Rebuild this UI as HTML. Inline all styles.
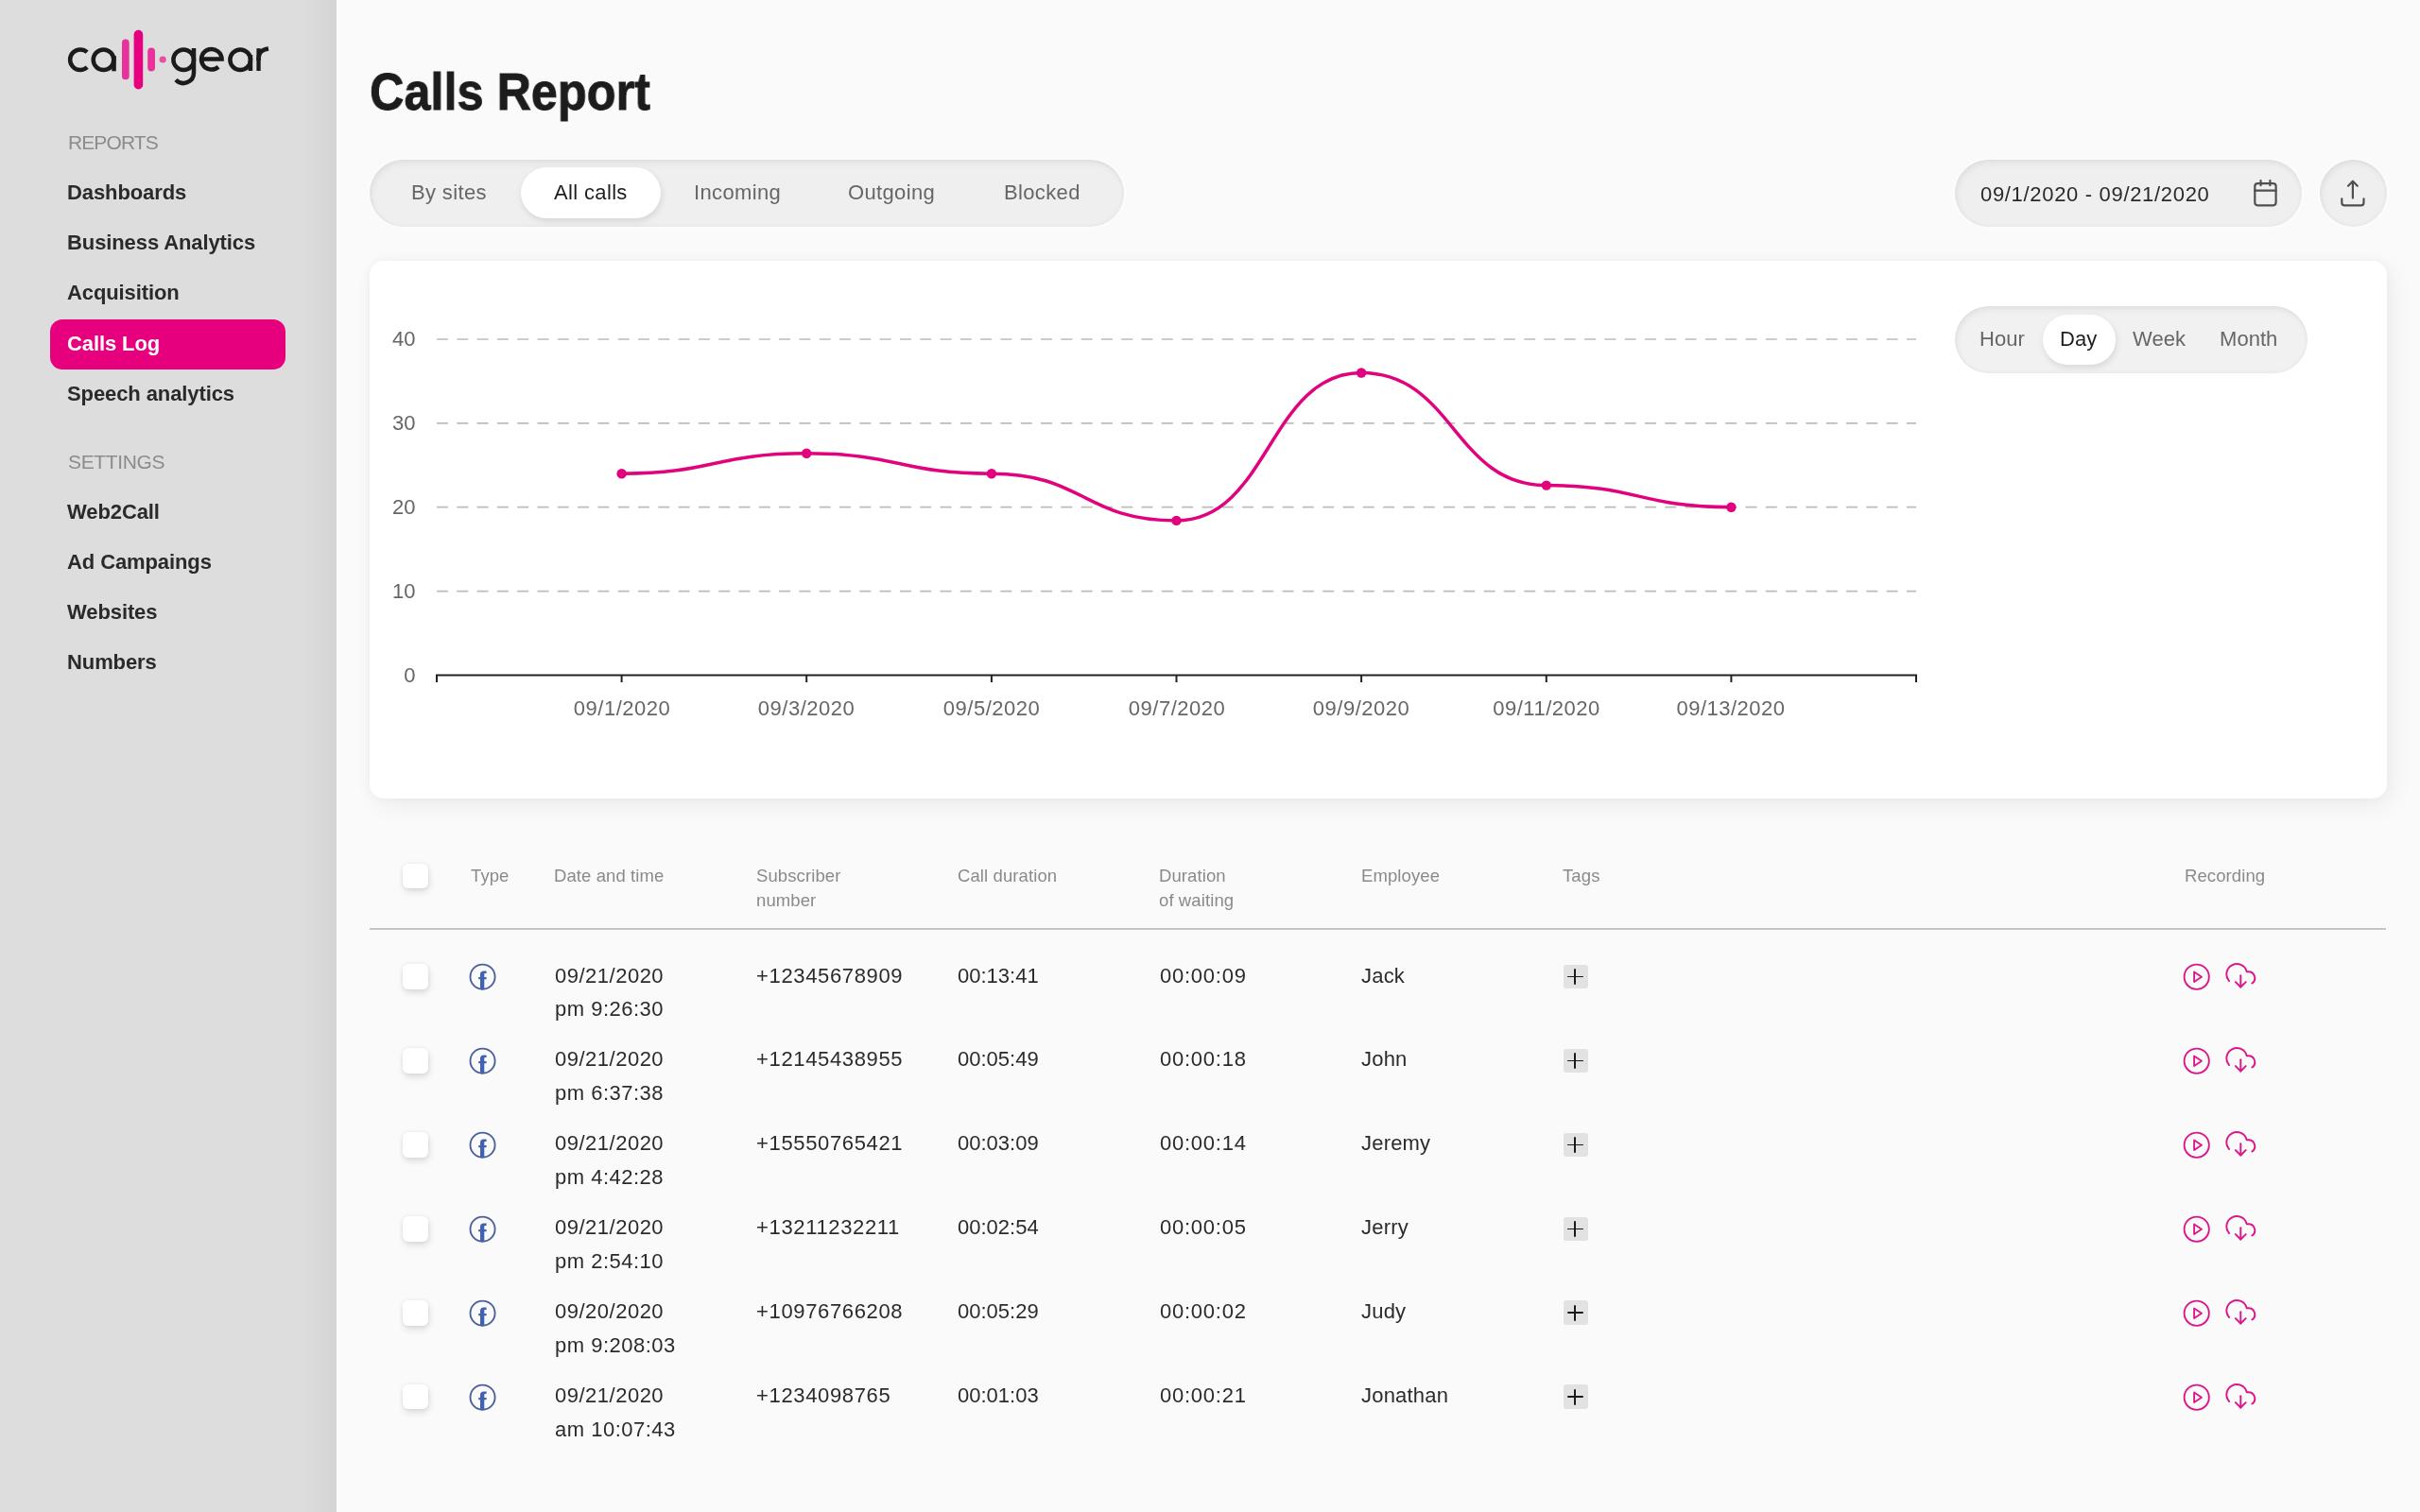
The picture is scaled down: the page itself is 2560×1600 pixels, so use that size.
<!DOCTYPE html>
<html><head><meta charset="utf-8"><title>Calls Report</title><style>
*{margin:0;padding:0;box-sizing:border-box}
html,body{width:2560px;height:1600px;overflow:hidden;background:#fafafa;font-family:"Liberation Sans",sans-serif}
.t{position:absolute;white-space:nowrap;will-change:transform}
.ic{position:absolute}
#sb{position:absolute;left:0;top:0;width:355.5px;height:1600px;background:linear-gradient(90deg,#dddddd 0,#dddddd 318px,#d8d8d8 340px,#d5d5d5 355px);box-shadow:1.5px 0 2px #fefefe}
.pillbox{position:absolute;border-radius:36px;background:#efefef;box-shadow:inset 0 0 5px rgba(0,0,0,0.05),inset 2px 4px 7px rgba(0,0,0,0.05),0 0 6px rgba(255,255,255,0.9)}
.pill{position:absolute;border-radius:27px;background:#fff;box-shadow:1px 3px 7px rgba(0,0,0,0.11)}
#card{position:absolute;left:391px;top:275.5px;width:2134px;height:569.5px;background:#fff;border-radius:15px;box-shadow:0 0 12px rgba(0,0,0,0.04),6px 8px 26px rgba(0,0,0,0.055)}
.cb{position:absolute;width:26.5px;height:26.5px;border-radius:6px;background:#fff;box-shadow:0 0 5px rgba(0,0,0,0.07),1px 4px 7px rgba(0,0,0,0.11)}
.plus{position:absolute;width:25.7px;height:25.7px;border-radius:3px;background:#e2e2e2}
.plus:before{content:"";position:absolute;left:4.4px;top:12px;width:16.8px;height:1.7px;background:#1a1a1a;border-radius:1px}
.plus:after{content:"";position:absolute;left:11.3px;top:4.4px;width:1.7px;height:17.2px;background:#1a1a1a;border-radius:1px}
</style></head>
<body>
<div id="sb"></div>
<svg style="position:absolute;left:0;top:0" width="356" height="110" viewBox="0 0 356 110">
<g fill="none" stroke="#1b1b1b" stroke-width="4.5">
 <path d="M92.2 55.2 A10.8 10.8 0 1 0 92.2 71.2"/>
 <circle cx="109.5" cy="63.2" r="10.8"/>
 <circle cx="194.2" cy="63.2" r="10.8"/>
 <path d="M205 51 V77 A11 11 0 0 1 186 84.5"/>
 <path d="M213.2 62.6 H234.6 A10.8 10.8 0 1 0 231 70.8"/>
 <circle cx="254.2" cy="63.2" r="10.8"/>
</g>
<rect x="118.3" y="59" width="4.5" height="16.3" fill="#1b1b1b"/>
<rect x="262.7" y="58" width="4.5" height="17" fill="#1b1b1b"/>
<rect x="271.4" y="51.2" width="4.3" height="23.8" fill="#1b1b1b"/>
<path d="M273.5 64 C273.5 55 277 52.5 284 51.5" fill="none" stroke="#1b1b1b" stroke-width="4.5"/>
<rect x="129" y="41.4" width="7.7" height="42.9" rx="3.85" fill="#e6339b"/>
<rect x="141.6" y="31.8" width="9.6" height="62.7" rx="4.8" fill="#e6007f"/>
<rect x="156.2" y="50.5" width="7.8" height="25" rx="3.9" fill="#e8339b"/>
<circle cx="172.2" cy="63" r="3.6" fill="#ea4fa5"/>
</svg>
<div class="t" style="left:72.0px;top:140.3px;font-size:21px;line-height:21px;font-weight:400;color:#8c8c8c;letter-spacing:-0.9px;">REPORTS</div>
<div style="position:absolute;left:53.4px;top:337.6px;width:248.8px;height:53px;border-radius:13px;background:#e6007e"></div>
<div class="t" style="left:71.0px;top:192.6px;font-size:22px;line-height:22px;font-weight:700;color:#2a2a2a;letter-spacing:-0.1px;">Dashboards</div>
<div class="t" style="left:71.0px;top:245.9px;font-size:22px;line-height:22px;font-weight:700;color:#2a2a2a;letter-spacing:-0.1px;">Business Analytics</div>
<div class="t" style="left:71.0px;top:299.3px;font-size:22px;line-height:22px;font-weight:700;color:#2a2a2a;letter-spacing:-0.1px;">Acquisition</div>
<div class="t" style="left:71.0px;top:352.7px;font-size:22px;line-height:22px;font-weight:700;color:#ffffff;letter-spacing:-0.1px;">Calls Log</div>
<div class="t" style="left:71.0px;top:406.3px;font-size:22px;line-height:22px;font-weight:700;color:#2a2a2a;letter-spacing:-0.1px;">Speech analytics</div>
<div class="t" style="left:72.0px;top:478.1px;font-size:21px;line-height:21px;font-weight:400;color:#8c8c8c;letter-spacing:-0.35px;">SETTINGS</div>
<div class="t" style="left:71.0px;top:530.6px;font-size:22px;line-height:22px;font-weight:700;color:#2a2a2a;letter-spacing:-0.1px;">Web2Call</div>
<div class="t" style="left:71.0px;top:583.7px;font-size:22px;line-height:22px;font-weight:700;color:#2a2a2a;letter-spacing:-0.1px;">Ad Campaings</div>
<div class="t" style="left:71.0px;top:636.7px;font-size:22px;line-height:22px;font-weight:700;color:#2a2a2a;letter-spacing:-0.1px;">Websites</div>
<div class="t" style="left:71.0px;top:690.1px;font-size:22px;line-height:22px;font-weight:700;color:#2a2a2a;letter-spacing:-0.1px;">Numbers</div>
<div class="t" style="left:391.0px;top:69.3px;font-size:56px;line-height:56px;font-weight:700;color:#1c1c1c;letter-spacing:0px;transform:scaleX(0.9);transform-origin:0 0;-webkit-text-stroke:0.9px #1c1c1c;">Calls Report</div>
<div class="pillbox" style="left:391px;top:169px;width:798px;height:71px"></div>
<div class="pill" style="left:551px;top:177.4px;width:147.5px;height:54px"></div>
<div class="t" style="left:434.9px;top:193.3px;font-size:22px;line-height:22px;font-weight:400;color:#666;letter-spacing:0.35px;">By sites</div>
<div class="t" style="left:585.9px;top:193.3px;font-size:22px;line-height:22px;font-weight:400;color:#1e1e1e;letter-spacing:0.35px;">All calls</div>
<div class="t" style="left:733.5px;top:193.3px;font-size:22px;line-height:22px;font-weight:400;color:#666;letter-spacing:0.35px;">Incoming</div>
<div class="t" style="left:897.4px;top:193.3px;font-size:22px;line-height:22px;font-weight:400;color:#666;letter-spacing:0.35px;">Outgoing</div>
<div class="t" style="left:1062.3px;top:193.3px;font-size:22px;line-height:22px;font-weight:400;color:#666;letter-spacing:0.35px;">Blocked</div>
<div class="pillbox" style="left:2068px;top:169px;width:367px;height:71px"></div>
<div class="t" style="left:2094.5px;top:194.8px;font-size:22px;line-height:22px;font-weight:400;color:#2a2a2a;letter-spacing:0.68px;">09/1/2020 - 09/21/2020</div>
<svg style="position:absolute;left:2380px;top:188px" width="32" height="32" viewBox="0 0 32 32" fill="none" stroke="#505050" stroke-width="2.2" stroke-linecap="round">
<rect x="5.3" y="6.2" width="22.3" height="23.1" rx="3"/><line x1="5.3" y1="13.7" x2="27.6" y2="13.7"/><line x1="11.5" y1="3.1" x2="11.5" y2="8.2"/><line x1="21.4" y1="3.1" x2="21.4" y2="8.2"/></svg>
<div class="pillbox" style="left:2453.6px;top:169px;width:71px;height:71px"></div>
<svg style="position:absolute;left:2473px;top:188px" width="32" height="32" viewBox="0 0 32 32" fill="none" stroke="#505050" stroke-width="2.2" stroke-linecap="round" stroke-linejoin="round">
<path d="M4.3 22.4 V26.4 Q4.3 29.3 7.2 29.3 H24.6 Q27.5 29.3 27.5 26.4 V22.4"/><line x1="15.9" y1="3.8" x2="15.9" y2="21.6"/><polyline points="11 8.7 15.9 3.8 20.8 8.7"/></svg>
<div id="card"></div>
<div class="t" style="left:300px;width:139.5px;text-align:right;top:348.3px;font-size:22px;line-height:22px;color:#666">40</div>
<div class="t" style="left:300px;width:139.5px;text-align:right;top:437.2px;font-size:22px;line-height:22px;color:#666">30</div>
<div class="t" style="left:300px;width:139.5px;text-align:right;top:526.0px;font-size:22px;line-height:22px;color:#666">20</div>
<div class="t" style="left:300px;width:139.5px;text-align:right;top:614.8px;font-size:22px;line-height:22px;color:#666">10</div>
<div class="t" style="left:300px;width:139.5px;text-align:right;top:703.7px;font-size:22px;line-height:22px;color:#666">0</div>
<svg style="position:absolute;left:0;top:0" width="2560" height="800"><line x1="462.0" y1="359" x2="2027.0" y2="359" stroke="#bcbcbc" stroke-width="1.7" stroke-dasharray="12 9.3"/><line x1="462.0" y1="447.85" x2="2027.0" y2="447.85" stroke="#bcbcbc" stroke-width="1.7" stroke-dasharray="12 9.3"/><line x1="462.0" y1="536.7" x2="2027.0" y2="536.7" stroke="#bcbcbc" stroke-width="1.7" stroke-dasharray="12 9.3"/><line x1="462.0" y1="625.55" x2="2027.0" y2="625.55" stroke="#bcbcbc" stroke-width="1.7" stroke-dasharray="12 9.3"/><line x1="461.0" y1="714.4" x2="2028.0" y2="714.4" stroke="#222" stroke-width="2"/><line x1="462.0" y1="714" x2="462.0" y2="722" stroke="#222" stroke-width="2"/><line x1="657.6" y1="714" x2="657.6" y2="722" stroke="#222" stroke-width="2"/><line x1="853.2" y1="714" x2="853.2" y2="722" stroke="#222" stroke-width="2"/><line x1="1048.9" y1="714" x2="1048.9" y2="722" stroke="#222" stroke-width="2"/><line x1="1244.5" y1="714" x2="1244.5" y2="722" stroke="#222" stroke-width="2"/><line x1="1440.1" y1="714" x2="1440.1" y2="722" stroke="#222" stroke-width="2"/><line x1="1635.8" y1="714" x2="1635.8" y2="722" stroke="#222" stroke-width="2"/><line x1="1831.4" y1="714" x2="1831.4" y2="722" stroke="#222" stroke-width="2"/><line x1="2027.0" y1="714" x2="2027.0" y2="722" stroke="#222" stroke-width="2"/><path d="M657.6,501.2 C755.4,501.2 755.4,479.8 853.2,479.8 C951.1,479.8 951.1,501.2 1048.9,501.2 C1146.7,501.2 1146.7,550.9 1244.5,550.9 C1342.3,550.9 1342.3,394.5 1440.1,394.5 C1537.9,394.5 1537.9,513.6 1635.8,513.6 C1733.6,513.6 1733.6,536.7 1831.4,536.7" fill="none" stroke="#e0037d" stroke-width="3.5"/><circle cx="657.6" cy="501.2" r="5.2" fill="#e2007d"/><circle cx="853.2" cy="479.8" r="5.2" fill="#e2007d"/><circle cx="1048.9" cy="501.2" r="5.2" fill="#e2007d"/><circle cx="1244.5" cy="550.9" r="5.2" fill="#e2007d"/><circle cx="1440.1" cy="394.5" r="5.2" fill="#e2007d"/><circle cx="1635.8" cy="513.6" r="5.2" fill="#e2007d"/><circle cx="1831.4" cy="536.7" r="5.2" fill="#e2007d"/></svg>
<div class="t" style="left:557.6px;width:200px;text-align:center;top:739.0px;font-size:22px;line-height:22px;color:#666;letter-spacing:0.5px">09/1/2020</div>
<div class="t" style="left:753.2px;width:200px;text-align:center;top:739.0px;font-size:22px;line-height:22px;color:#666;letter-spacing:0.5px">09/3/2020</div>
<div class="t" style="left:948.9px;width:200px;text-align:center;top:739.0px;font-size:22px;line-height:22px;color:#666;letter-spacing:0.5px">09/5/2020</div>
<div class="t" style="left:1144.5px;width:200px;text-align:center;top:739.0px;font-size:22px;line-height:22px;color:#666;letter-spacing:0.5px">09/7/2020</div>
<div class="t" style="left:1340.1px;width:200px;text-align:center;top:739.0px;font-size:22px;line-height:22px;color:#666;letter-spacing:0.5px">09/9/2020</div>
<div class="t" style="left:1535.8px;width:200px;text-align:center;top:739.0px;font-size:22px;line-height:22px;color:#666;letter-spacing:0.5px">09/11/2020</div>
<div class="t" style="left:1731.4px;width:200px;text-align:center;top:739.0px;font-size:22px;line-height:22px;color:#666;letter-spacing:0.5px">09/13/2020</div>
<div class="pillbox" style="left:2068px;top:323.6px;width:373px;height:71px;background:#f1f1f1"></div>
<div class="pill" style="left:2161.4px;top:332.6px;width:76.3px;height:53.4px"></div>
<div class="t" style="left:2093.9px;top:347.9px;font-size:22px;line-height:22px;font-weight:400;color:#666;letter-spacing:0.05px;">Hour</div>
<div class="t" style="left:2179.2px;top:347.9px;font-size:22px;line-height:22px;font-weight:400;color:#1e1e1e;letter-spacing:0.05px;">Day</div>
<div class="t" style="left:2255.5px;top:347.9px;font-size:22px;line-height:22px;font-weight:400;color:#666;letter-spacing:0.05px;">Week</div>
<div class="t" style="left:2347.9px;top:347.9px;font-size:22px;line-height:22px;font-weight:400;color:#666;letter-spacing:0.05px;">Month</div>
<div class="cb" style="left:426.4px;top:913.7px"></div>
<div class="t" style="left:497.9px;top:913.9px;font-size:18.5px;line-height:25.8px;color:#8a8a8a;letter-spacing:0.1px">Type</div>
<div class="t" style="left:586.4px;top:913.9px;font-size:18.5px;line-height:25.8px;color:#8a8a8a;letter-spacing:0.1px">Date and time</div>
<div class="t" style="left:799.6px;top:913.9px;font-size:18.5px;line-height:25.8px;color:#8a8a8a;letter-spacing:0.1px">Subscriber<br>number</div>
<div class="t" style="left:1012.5px;top:913.9px;font-size:18.5px;line-height:25.8px;color:#8a8a8a;letter-spacing:0.1px">Call duration</div>
<div class="t" style="left:1226.2px;top:913.9px;font-size:18.5px;line-height:25.8px;color:#8a8a8a;letter-spacing:0.1px">Duration<br>of waiting</div>
<div class="t" style="left:1439.7px;top:913.9px;font-size:18.5px;line-height:25.8px;color:#8a8a8a;letter-spacing:0.1px">Employee</div>
<div class="t" style="left:1653.0px;top:913.9px;font-size:18.5px;line-height:25.8px;color:#8a8a8a;letter-spacing:0.1px">Tags</div>
<div class="t" style="left:2310.7px;top:913.9px;font-size:18.5px;line-height:25.8px;color:#8a8a8a;letter-spacing:0.1px">Recording</div>
<div style="position:absolute;left:391px;top:982.3px;width:2133px;height:2px;background:#c4c4c4"></div>
<div class="cb" style="left:426.4px;top:1020.4px"></div>
<svg class="ic" style="left:495.1px;top:1018.1px" width="30" height="30" viewBox="0 0 30 30"><circle cx="15.55" cy="15.65" r="13.05" fill="none" stroke="#4c5f9c" stroke-width="1.85"/><path d="M13 28.6 V18.3 H11.2 V16.1 H13 V13.4 C13 10.9 14.3 9.5 16.7 9.5 H19.6 V11.9 H18 C17.5 11.9 17.3 12.2 17.3 12.7 V16.1 H19.6 V18.3 H17.3 V28.6 Z" fill="#4262b0"/></svg>
<div class="t" style="left:586.5px;top:1021.5px;font-size:22px;line-height:22px;font-weight:400;color:#2b2b2b;letter-spacing:0.5px;">09/21/2020</div>
<div class="t" style="left:586.5px;top:1057.3px;font-size:22px;line-height:22px;font-weight:400;color:#2b2b2b;letter-spacing:0.5px;">pm 9:26:30</div>
<div class="t" style="left:799.5px;top:1021.5px;font-size:22px;line-height:22px;font-weight:400;color:#2b2b2b;letter-spacing:0.65px;">+12345678909</div>
<div class="t" style="left:1012.5px;top:1021.5px;font-size:22px;line-height:22px;font-weight:400;color:#2b2b2b;letter-spacing:0.0px;">00:13:41</div>
<div class="t" style="left:1226.7px;top:1021.5px;font-size:22px;line-height:22px;font-weight:400;color:#2b2b2b;letter-spacing:0.75px;">00:00:09</div>
<div class="t" style="left:1439.7px;top:1021.5px;font-size:22px;line-height:22px;font-weight:400;color:#2b2b2b;letter-spacing:0.2px;">Jack</div>
<div class="plus" style="left:1654px;top:1020.8px"></div>
<svg class="ic" style="left:2308.1px;top:1018.1px" width="32" height="32" viewBox="0 0 24.43 24.43" fill="none" stroke="#dc168a" stroke-width="1.42" stroke-linejoin="round"><circle cx="12" cy="12" r="10"/><polygon points="10 8 16 12 10 16 10 8"/></svg>
<svg class="ic" style="left:2354.1px;top:1016.4px" width="36" height="34" viewBox="0 0 26.51 25.04" fill="none" stroke="#dc168a" stroke-width="1.42" stroke-linecap="round" stroke-linejoin="round"><polyline points="8 17 12 21 16 17"/><line x1="12" y1="12" x2="12" y2="21"/><path d="M20.88 18.09A5 5 0 0 0 18 9h-1.26A8 8 0 1 0 3 16.29"/></svg>
<div class="cb" style="left:426.4px;top:1109.3px"></div>
<svg class="ic" style="left:495.1px;top:1107.0px" width="30" height="30" viewBox="0 0 30 30"><circle cx="15.55" cy="15.65" r="13.05" fill="none" stroke="#4c5f9c" stroke-width="1.85"/><path d="M13 28.6 V18.3 H11.2 V16.1 H13 V13.4 C13 10.9 14.3 9.5 16.7 9.5 H19.6 V11.9 H18 C17.5 11.9 17.3 12.2 17.3 12.7 V16.1 H19.6 V18.3 H17.3 V28.6 Z" fill="#4262b0"/></svg>
<div class="t" style="left:586.5px;top:1110.4px;font-size:22px;line-height:22px;font-weight:400;color:#2b2b2b;letter-spacing:0.5px;">09/21/2020</div>
<div class="t" style="left:586.5px;top:1146.2px;font-size:22px;line-height:22px;font-weight:400;color:#2b2b2b;letter-spacing:0.5px;">pm 6:37:38</div>
<div class="t" style="left:799.5px;top:1110.4px;font-size:22px;line-height:22px;font-weight:400;color:#2b2b2b;letter-spacing:0.65px;">+12145438955</div>
<div class="t" style="left:1012.5px;top:1110.4px;font-size:22px;line-height:22px;font-weight:400;color:#2b2b2b;letter-spacing:0.0px;">00:05:49</div>
<div class="t" style="left:1226.7px;top:1110.4px;font-size:22px;line-height:22px;font-weight:400;color:#2b2b2b;letter-spacing:0.75px;">00:00:18</div>
<div class="t" style="left:1439.7px;top:1110.4px;font-size:22px;line-height:22px;font-weight:400;color:#2b2b2b;letter-spacing:0.2px;">John</div>
<div class="plus" style="left:1654px;top:1109.7px"></div>
<svg class="ic" style="left:2308.1px;top:1107.0px" width="32" height="32" viewBox="0 0 24.43 24.43" fill="none" stroke="#dc168a" stroke-width="1.42" stroke-linejoin="round"><circle cx="12" cy="12" r="10"/><polygon points="10 8 16 12 10 16 10 8"/></svg>
<svg class="ic" style="left:2354.1px;top:1105.3px" width="36" height="34" viewBox="0 0 26.51 25.04" fill="none" stroke="#dc168a" stroke-width="1.42" stroke-linecap="round" stroke-linejoin="round"><polyline points="8 17 12 21 16 17"/><line x1="12" y1="12" x2="12" y2="21"/><path d="M20.88 18.09A5 5 0 0 0 18 9h-1.26A8 8 0 1 0 3 16.29"/></svg>
<div class="cb" style="left:426.4px;top:1198.2px"></div>
<svg class="ic" style="left:495.1px;top:1195.9px" width="30" height="30" viewBox="0 0 30 30"><circle cx="15.55" cy="15.65" r="13.05" fill="none" stroke="#4c5f9c" stroke-width="1.85"/><path d="M13 28.6 V18.3 H11.2 V16.1 H13 V13.4 C13 10.9 14.3 9.5 16.7 9.5 H19.6 V11.9 H18 C17.5 11.9 17.3 12.2 17.3 12.7 V16.1 H19.6 V18.3 H17.3 V28.6 Z" fill="#4262b0"/></svg>
<div class="t" style="left:586.5px;top:1199.3px;font-size:22px;line-height:22px;font-weight:400;color:#2b2b2b;letter-spacing:0.5px;">09/21/2020</div>
<div class="t" style="left:586.5px;top:1235.1px;font-size:22px;line-height:22px;font-weight:400;color:#2b2b2b;letter-spacing:0.5px;">pm 4:42:28</div>
<div class="t" style="left:799.5px;top:1199.3px;font-size:22px;line-height:22px;font-weight:400;color:#2b2b2b;letter-spacing:0.65px;">+15550765421</div>
<div class="t" style="left:1012.5px;top:1199.3px;font-size:22px;line-height:22px;font-weight:400;color:#2b2b2b;letter-spacing:0.0px;">00:03:09</div>
<div class="t" style="left:1226.7px;top:1199.3px;font-size:22px;line-height:22px;font-weight:400;color:#2b2b2b;letter-spacing:0.75px;">00:00:14</div>
<div class="t" style="left:1439.7px;top:1199.3px;font-size:22px;line-height:22px;font-weight:400;color:#2b2b2b;letter-spacing:0.2px;">Jeremy</div>
<div class="plus" style="left:1654px;top:1198.6px"></div>
<svg class="ic" style="left:2308.1px;top:1195.9px" width="32" height="32" viewBox="0 0 24.43 24.43" fill="none" stroke="#dc168a" stroke-width="1.42" stroke-linejoin="round"><circle cx="12" cy="12" r="10"/><polygon points="10 8 16 12 10 16 10 8"/></svg>
<svg class="ic" style="left:2354.1px;top:1194.2px" width="36" height="34" viewBox="0 0 26.51 25.04" fill="none" stroke="#dc168a" stroke-width="1.42" stroke-linecap="round" stroke-linejoin="round"><polyline points="8 17 12 21 16 17"/><line x1="12" y1="12" x2="12" y2="21"/><path d="M20.88 18.09A5 5 0 0 0 18 9h-1.26A8 8 0 1 0 3 16.29"/></svg>
<div class="cb" style="left:426.4px;top:1287.1px"></div>
<svg class="ic" style="left:495.1px;top:1284.8px" width="30" height="30" viewBox="0 0 30 30"><circle cx="15.55" cy="15.65" r="13.05" fill="none" stroke="#4c5f9c" stroke-width="1.85"/><path d="M13 28.6 V18.3 H11.2 V16.1 H13 V13.4 C13 10.9 14.3 9.5 16.7 9.5 H19.6 V11.9 H18 C17.5 11.9 17.3 12.2 17.3 12.7 V16.1 H19.6 V18.3 H17.3 V28.6 Z" fill="#4262b0"/></svg>
<div class="t" style="left:586.5px;top:1288.2px;font-size:22px;line-height:22px;font-weight:400;color:#2b2b2b;letter-spacing:0.5px;">09/21/2020</div>
<div class="t" style="left:586.5px;top:1324.0px;font-size:22px;line-height:22px;font-weight:400;color:#2b2b2b;letter-spacing:0.5px;">pm 2:54:10</div>
<div class="t" style="left:799.5px;top:1288.2px;font-size:22px;line-height:22px;font-weight:400;color:#2b2b2b;letter-spacing:0.65px;">+13211232211</div>
<div class="t" style="left:1012.5px;top:1288.2px;font-size:22px;line-height:22px;font-weight:400;color:#2b2b2b;letter-spacing:0.0px;">00:02:54</div>
<div class="t" style="left:1226.7px;top:1288.2px;font-size:22px;line-height:22px;font-weight:400;color:#2b2b2b;letter-spacing:0.75px;">00:00:05</div>
<div class="t" style="left:1439.7px;top:1288.2px;font-size:22px;line-height:22px;font-weight:400;color:#2b2b2b;letter-spacing:0.2px;">Jerry</div>
<div class="plus" style="left:1654px;top:1287.5px"></div>
<svg class="ic" style="left:2308.1px;top:1284.8px" width="32" height="32" viewBox="0 0 24.43 24.43" fill="none" stroke="#dc168a" stroke-width="1.42" stroke-linejoin="round"><circle cx="12" cy="12" r="10"/><polygon points="10 8 16 12 10 16 10 8"/></svg>
<svg class="ic" style="left:2354.1px;top:1283.1px" width="36" height="34" viewBox="0 0 26.51 25.04" fill="none" stroke="#dc168a" stroke-width="1.42" stroke-linecap="round" stroke-linejoin="round"><polyline points="8 17 12 21 16 17"/><line x1="12" y1="12" x2="12" y2="21"/><path d="M20.88 18.09A5 5 0 0 0 18 9h-1.26A8 8 0 1 0 3 16.29"/></svg>
<div class="cb" style="left:426.4px;top:1376.0px"></div>
<svg class="ic" style="left:495.1px;top:1373.7px" width="30" height="30" viewBox="0 0 30 30"><circle cx="15.55" cy="15.65" r="13.05" fill="none" stroke="#4c5f9c" stroke-width="1.85"/><path d="M13 28.6 V18.3 H11.2 V16.1 H13 V13.4 C13 10.9 14.3 9.5 16.7 9.5 H19.6 V11.9 H18 C17.5 11.9 17.3 12.2 17.3 12.7 V16.1 H19.6 V18.3 H17.3 V28.6 Z" fill="#4262b0"/></svg>
<div class="t" style="left:586.5px;top:1377.1px;font-size:22px;line-height:22px;font-weight:400;color:#2b2b2b;letter-spacing:0.5px;">09/20/2020</div>
<div class="t" style="left:586.5px;top:1412.9px;font-size:22px;line-height:22px;font-weight:400;color:#2b2b2b;letter-spacing:0.5px;">pm 9:208:03</div>
<div class="t" style="left:799.5px;top:1377.1px;font-size:22px;line-height:22px;font-weight:400;color:#2b2b2b;letter-spacing:0.65px;">+10976766208</div>
<div class="t" style="left:1012.5px;top:1377.1px;font-size:22px;line-height:22px;font-weight:400;color:#2b2b2b;letter-spacing:0.0px;">00:05:29</div>
<div class="t" style="left:1226.7px;top:1377.1px;font-size:22px;line-height:22px;font-weight:400;color:#2b2b2b;letter-spacing:0.75px;">00:00:02</div>
<div class="t" style="left:1439.7px;top:1377.1px;font-size:22px;line-height:22px;font-weight:400;color:#2b2b2b;letter-spacing:0.2px;">Judy</div>
<div class="plus" style="left:1654px;top:1376.4px"></div>
<svg class="ic" style="left:2308.1px;top:1373.7px" width="32" height="32" viewBox="0 0 24.43 24.43" fill="none" stroke="#dc168a" stroke-width="1.42" stroke-linejoin="round"><circle cx="12" cy="12" r="10"/><polygon points="10 8 16 12 10 16 10 8"/></svg>
<svg class="ic" style="left:2354.1px;top:1372.0px" width="36" height="34" viewBox="0 0 26.51 25.04" fill="none" stroke="#dc168a" stroke-width="1.42" stroke-linecap="round" stroke-linejoin="round"><polyline points="8 17 12 21 16 17"/><line x1="12" y1="12" x2="12" y2="21"/><path d="M20.88 18.09A5 5 0 0 0 18 9h-1.26A8 8 0 1 0 3 16.29"/></svg>
<div class="cb" style="left:426.4px;top:1464.9px"></div>
<svg class="ic" style="left:495.1px;top:1462.6px" width="30" height="30" viewBox="0 0 30 30"><circle cx="15.55" cy="15.65" r="13.05" fill="none" stroke="#4c5f9c" stroke-width="1.85"/><path d="M13 28.6 V18.3 H11.2 V16.1 H13 V13.4 C13 10.9 14.3 9.5 16.7 9.5 H19.6 V11.9 H18 C17.5 11.9 17.3 12.2 17.3 12.7 V16.1 H19.6 V18.3 H17.3 V28.6 Z" fill="#4262b0"/></svg>
<div class="t" style="left:586.5px;top:1466.0px;font-size:22px;line-height:22px;font-weight:400;color:#2b2b2b;letter-spacing:0.5px;">09/21/2020</div>
<div class="t" style="left:586.5px;top:1501.8px;font-size:22px;line-height:22px;font-weight:400;color:#2b2b2b;letter-spacing:0.5px;">am 10:07:43</div>
<div class="t" style="left:799.5px;top:1466.0px;font-size:22px;line-height:22px;font-weight:400;color:#2b2b2b;letter-spacing:0.65px;">+1234098765</div>
<div class="t" style="left:1012.5px;top:1466.0px;font-size:22px;line-height:22px;font-weight:400;color:#2b2b2b;letter-spacing:0.0px;">00:01:03</div>
<div class="t" style="left:1226.7px;top:1466.0px;font-size:22px;line-height:22px;font-weight:400;color:#2b2b2b;letter-spacing:0.75px;">00:00:21</div>
<div class="t" style="left:1439.7px;top:1466.0px;font-size:22px;line-height:22px;font-weight:400;color:#2b2b2b;letter-spacing:0.2px;">Jonathan</div>
<div class="plus" style="left:1654px;top:1465.3px"></div>
<svg class="ic" style="left:2308.1px;top:1462.6px" width="32" height="32" viewBox="0 0 24.43 24.43" fill="none" stroke="#dc168a" stroke-width="1.42" stroke-linejoin="round"><circle cx="12" cy="12" r="10"/><polygon points="10 8 16 12 10 16 10 8"/></svg>
<svg class="ic" style="left:2354.1px;top:1460.9px" width="36" height="34" viewBox="0 0 26.51 25.04" fill="none" stroke="#dc168a" stroke-width="1.42" stroke-linecap="round" stroke-linejoin="round"><polyline points="8 17 12 21 16 17"/><line x1="12" y1="12" x2="12" y2="21"/><path d="M20.88 18.09A5 5 0 0 0 18 9h-1.26A8 8 0 1 0 3 16.29"/></svg>
</body></html>
